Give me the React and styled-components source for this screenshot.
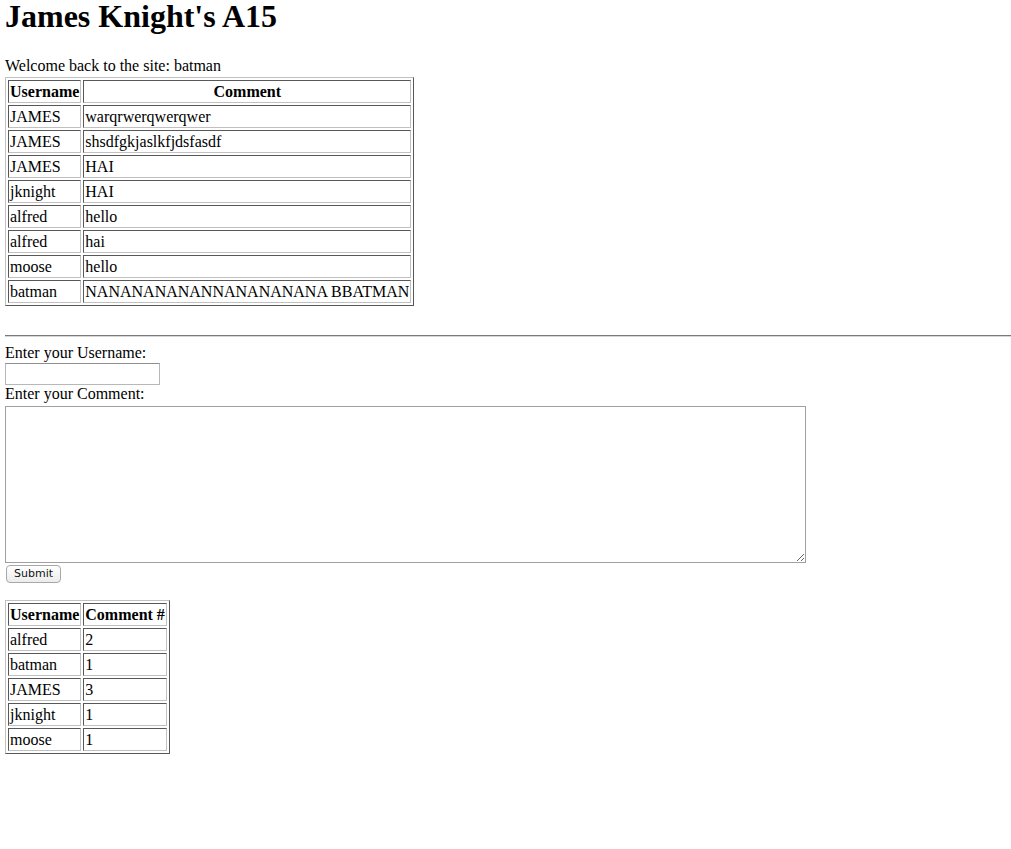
import React from 'react';
import styled, { createGlobalStyle } from 'styled-components';

const comments = [
  ['JAMES', 'warqrwerqwerqwer'],
  ['JAMES', 'shsdfgkjaslkfjdsfasdf'],
  ['JAMES', 'HAI'],
  ['jknight', 'HAI'],
  ['alfred', 'hello'],
  ['alfred', 'hai'],
  ['moose', 'hello'],
  ['batman', 'NANANANANANNANANANANA BBATMAN'],
];

const counts = [
  ['alfred', 2],
  ['batman', 1],
  ['JAMES', 3],
  ['jknight', 1],
  ['moose', 1],
];

const App = () => {
  return (
    <Page>
      <GlobalStyle />
      <Title>James Knight's A15</Title>
      <Welcome>Welcome back to the site: batman</Welcome>
      <DataTable>
        <thead>
          <tr>
            <Th>Username</Th>
            <Th>Comment</Th>
          </tr>
        </thead>
        <tbody>
          {comments.map(([user, text], i) => (
            <tr key={i}>
              <Td>{user}</Td>
              <Td>{text}</Td>
            </tr>
          ))}
        </tbody>
      </DataTable>
      <Rule />
      <Form onSubmit={(e) => e.preventDefault()}>
        <Label>Enter your Username:</Label>
        <TextInput type="text" />
        <Label>Enter your Comment:</Label>
        <TextArea />
        <SubmitButton type="submit">Submit</SubmitButton>
      </Form>
      <CountTable>
        <thead>
          <tr>
            <Th>Username</Th>
            <Th>Comment #</Th>
          </tr>
        </thead>
        <tbody>
          {counts.map(([user, n]) => (
            <tr key={user}>
              <Td>{user}</Td>
              <Td>{n}</Td>
            </tr>
          ))}
        </tbody>
      </CountTable>
    </Page>
  );
};

const GlobalStyle = createGlobalStyle`
  html, body {
    margin: 0;
    background: #fff;
  }
  body {
    font-family: "Liberation Serif", "Times New Roman", serif;
    font-size: 16px;
    color: #000;
  }
`;

const Page = styled.div`
  padding: 0 0 0 5px;
  overflow: hidden;
`;
const Title = styled.h1`
  font-size: 32px;
  font-weight: bold;
  line-height: 32px;
  margin: 0 0 25px 0;
`;
const Welcome = styled.div`
  line-height: 18px;
  height: 18px;
`;
const DataTable = styled.table`
  border-collapse: separate;
  border-spacing: 2px;
  border: 1px solid;
  border-color: #c0c0c0 #585858 #585858 #c0c0c0;
  margin-top: 2px;
`;
const CountTable = styled(DataTable)`
  margin-top: 17px;
`;
const cell = `
  border: 1px solid;
  border-color: #585858 #c0c0c0 #c0c0c0 #585858;
  padding: 1px 1px;
  line-height: 19px;
  height: 19px;
  white-space: nowrap;
`;
const Th = styled.th`
  ${cell}
  font-weight: bold;
  text-align: center;
`;
const Td = styled.td`
  ${cell}
  text-align: left;
`;
const Rule = styled.hr`
  margin: 29px 0 7px 0;
  border: 0;
  border-top: 1px solid #7a7a7a;
  border-bottom: 1px solid #d6d6d6;
  height: 0;
`;
const Form = styled.form`
  display: flex;
  flex-direction: column;
  align-items: flex-start;
`;
const Label = styled.div`
  line-height: 18px;
`;
const TextInput = styled.input`
  box-sizing: border-box;
  width: 155px;
  height: 22px;
  border: 1px solid;
  border-color: #8e8e8e #b8b8b8 #b8b8b8 #b8b8b8;
  margin: 1px 0 0 0;
  padding: 2px 3px;
  font-size: 13px;
`;
const TextArea = styled.textarea`
  box-sizing: border-box;
  width: 801px;
  height: 157px;
  border: 1px solid #a0a0a0;
  margin: 3px 0 0 0;
  padding: 2px;
  font-size: 13px;
  resize: both;
`;
const SubmitButton = styled.button`
  box-sizing: border-box;
  margin: 2px 0 0 1px;
  width: 55px;
  height: 18px;
  padding: 0;
  font-family: "DejaVu Sans", "Liberation Sans", sans-serif;
  font-size: 11px;
  line-height: 14px;
  color: #111;
  background: linear-gradient(#ffffff, #ececec);
  border: 1px solid #a8a8a8;
  border-radius: 4px;
`;

export default App;
